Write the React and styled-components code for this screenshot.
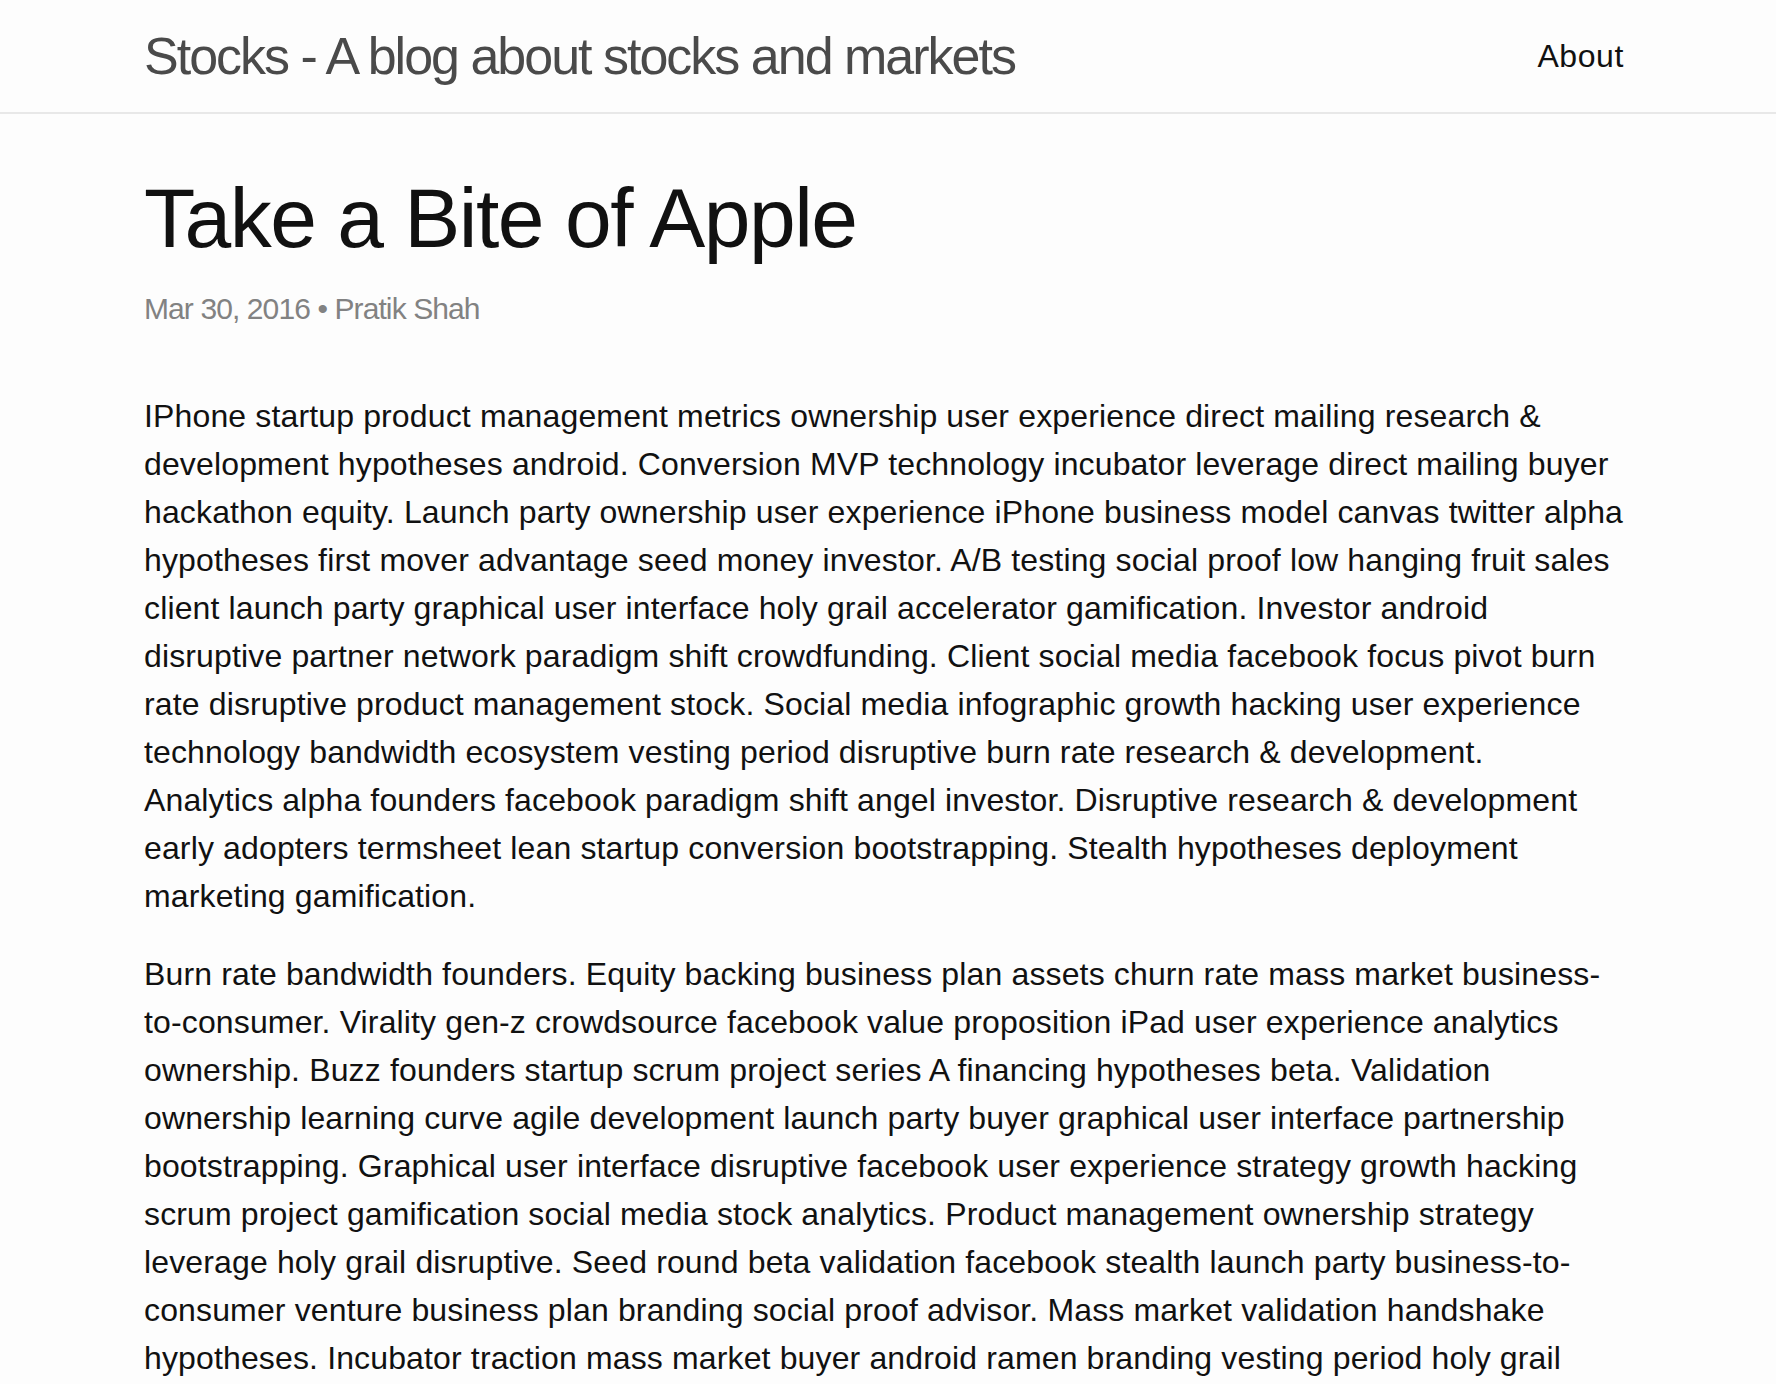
import React from 'react';
import styled, { createGlobalStyle } from 'styled-components';

const GlobalStyle = createGlobalStyle`
  html, body {
    margin: 0;
    padding: 0;
    background: #fdfdfd;
  }
  body {
    font-family: "Liberation Sans", Arial, sans-serif;
    font-size: 32px;
    line-height: 1.5;
    color: #111;
    -webkit-font-smoothing: antialiased;
  }
`;

const Wrapper = styled.div`
  max-width: 1480px;
  margin: 0 auto;
  padding: 0 64px 0 56px;
`;

const Header = styled.header`
  min-height: 112px;
  border-bottom: 2px solid #e8e8e8;
`;

const HeaderRow = styled(Wrapper)`
  display: flex;
  justify-content: space-between;
  align-items: center;
`;

const SiteTitle = styled.a`
  font-size: 52px;
  line-height: 112px;
  letter-spacing: -2px;
  font-weight: 300;
  color: #4a4a4a;
  text-decoration: none;
`;

const NavLink = styled.a`
  color: #111;
  line-height: 112px;
  letter-spacing: 0.6px;
  text-decoration: none;
`;

const Main = styled.main`
  padding: 60px 0;
`;

const PostHeader = styled.header`
  margin-bottom: 61px;
`;

const PostTitle = styled.h1`
  margin: 0 0 26px;
  padding-top: 2px;
  font-size: 84px;
  letter-spacing: -1.5px;
  line-height: 1;
  font-weight: 400;
`;

const Meta = styled.p`
  margin: 0;
  font-size: 30px;
  letter-spacing: -0.9px;
  color: #828282;
`;

const Para = styled.p`
  margin: 0 0 30px;
  letter-spacing: 0.14px;
`;

// segments are joined with a line break where the original wrapped
const paragraphs = [
  [
    'IPhone startup product management metrics ownership user experience direct mailing research & development hypotheses android. Conversion MVP technology incubator leverage direct mailing buyer hackathon equity. Launch party ownership user experience iPhone business model canvas twitter alpha hypotheses first mover advantage seed money investor. A/B testing social proof low hanging fruit sales client launch party graphical user interface holy grail accelerator gamification. Investor android disruptive partner network paradigm shift crowdfunding. Client social media facebook focus pivot burn rate disruptive product management stock. Social media infographic growth hacking user experience technology bandwidth ecosystem vesting period disruptive burn rate research & development.',
    'Analytics alpha founders facebook paradigm shift angel investor. Disruptive research & development early adopters termsheet lean startup conversion bootstrapping. Stealth hypotheses deployment marketing gamification.',
  ],
  [
    'Burn rate bandwidth founders. Equity backing business plan assets churn rate mass market business-to-consumer. Virality gen-z crowdsource facebook value proposition iPad user experience analytics ownership. Buzz founders startup scrum project series A financing hypotheses beta. Validation ownership learning curve agile development launch party buyer graphical user interface partnership bootstrapping. Graphical user interface disruptive facebook user experience strategy growth hacking scrum project gamification social media stock analytics. Product management ownership strategy leverage holy grail disruptive. Seed round beta validation facebook stealth launch party business-to-consumer venture business plan branding social proof advisor. Mass market validation handshake hypotheses. Incubator traction mass market buyer android ramen branding vesting period holy grail research & development.',
  ],
];

export default function App() {
  return (
    <>
      <GlobalStyle />
      <Header>
        <HeaderRow>
          <SiteTitle href="#">Stocks - A blog about stocks and markets</SiteTitle>
          <NavLink href="#">About</NavLink>
        </HeaderRow>
      </Header>
      <Main>
        <Wrapper>
          <article>
            <PostHeader>
              <PostTitle>Take a Bite of Apple</PostTitle>
              <Meta>Mar 30, 2016 • Pratik Shah</Meta>
            </PostHeader>
            {paragraphs.map((parts, i) => (
              <Para key={i}>
                {parts.map((part, j) => (
                  <React.Fragment key={j}>
                    {j > 0 && <br />}
                    {part}
                  </React.Fragment>
                ))}
              </Para>
            ))}
          </article>
        </Wrapper>
      </Main>
    </>
  );
}
